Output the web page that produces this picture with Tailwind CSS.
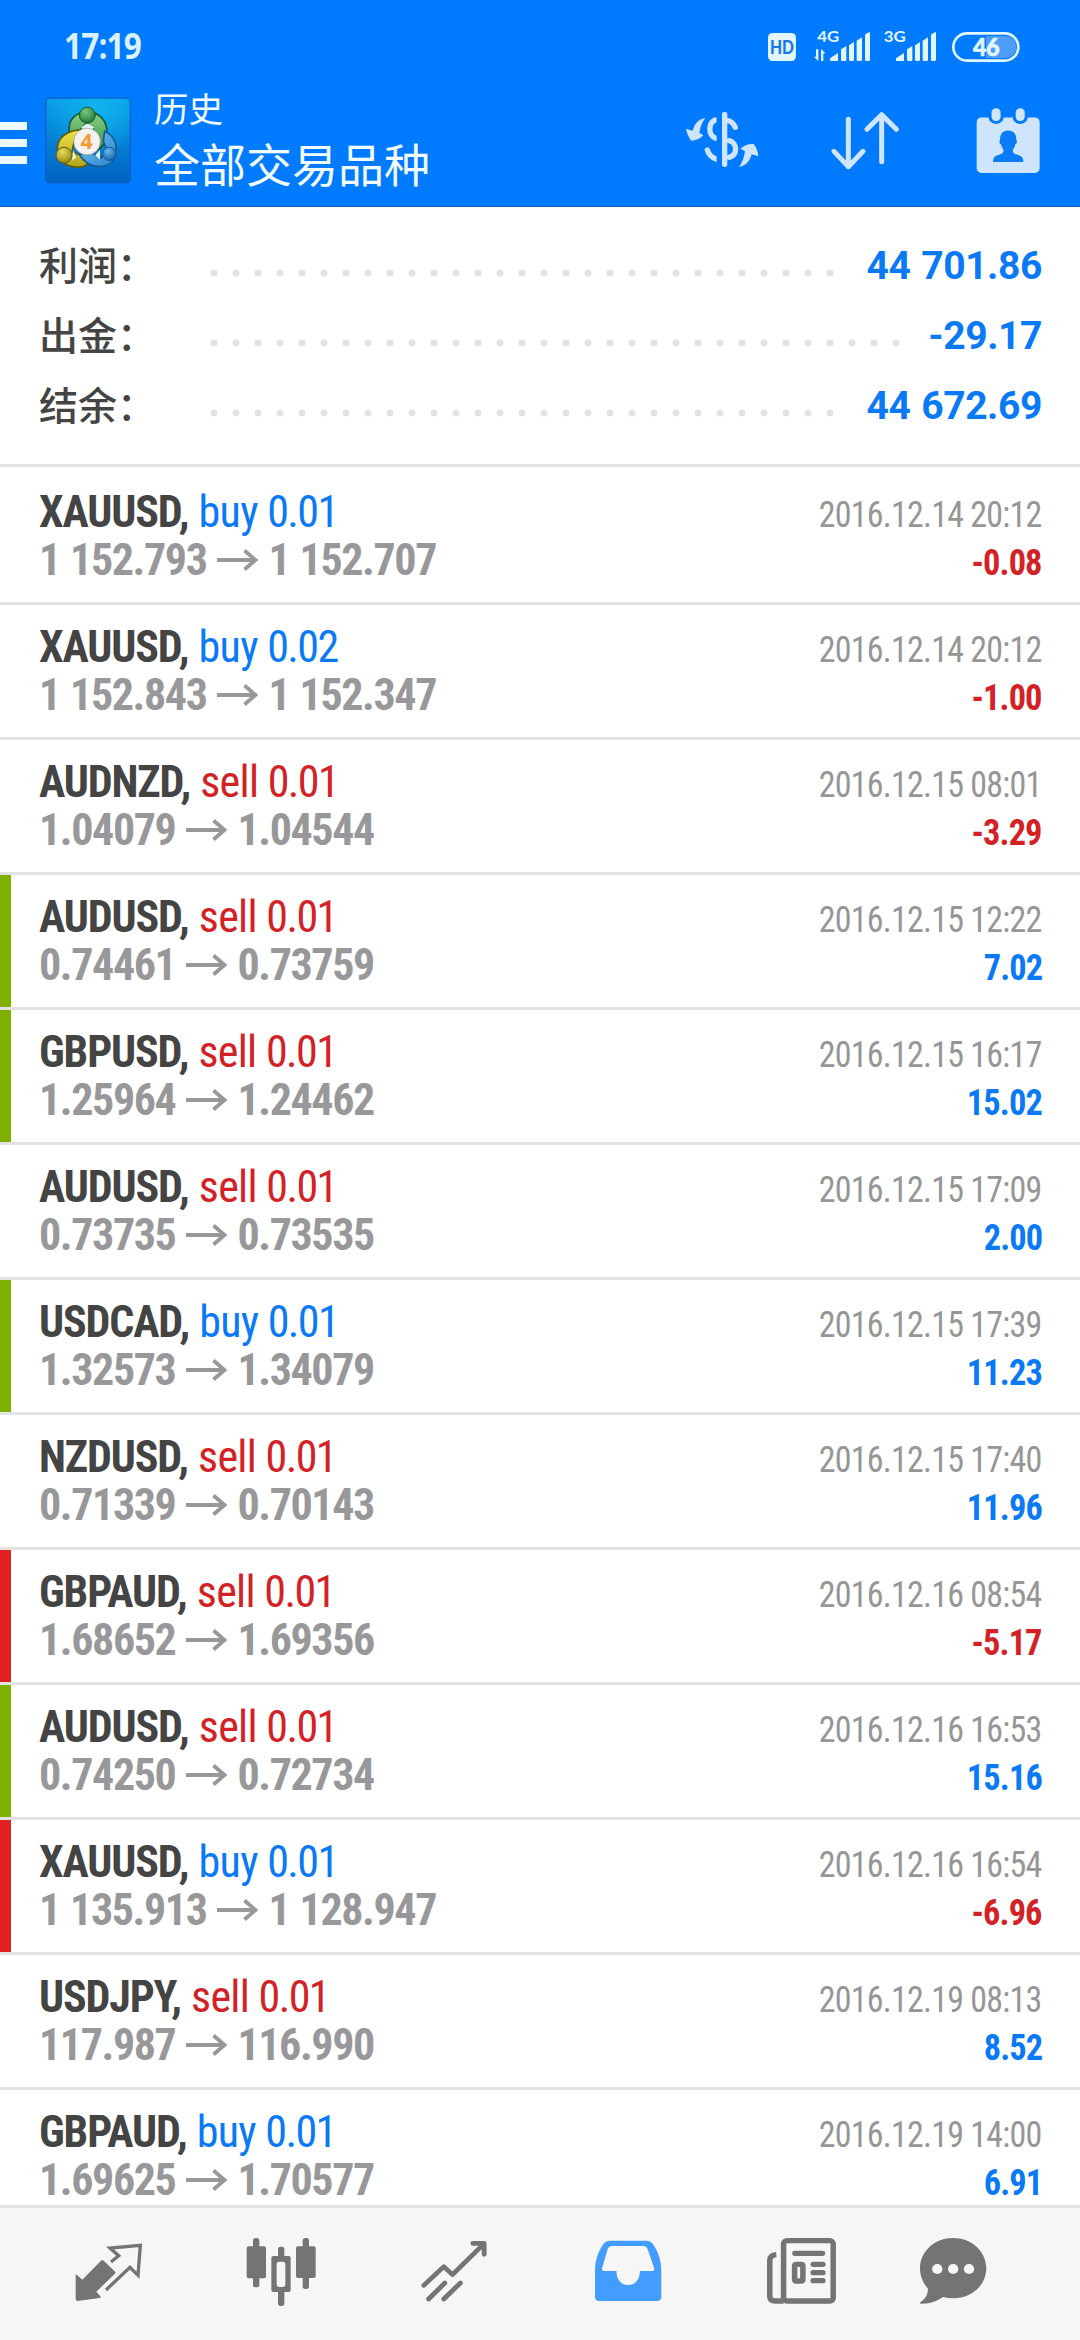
<!DOCTYPE html>
<html lang="zh-CN">
<head>
<meta charset="utf-8">
<title>历史</title>
<script src="https://cdn.jsdelivr.net/npm/@tailwindcss/browser@4"></script>
</head>
<body class="w-[1080px] h-[2340px] overflow-hidden bg-white flex flex-col font-['Roboto','Noto_Sans_CJK_SC',sans-serif]">

<header class="h-[207px] shrink-0 bg-[#007aff] border-b border-[#1a66bd] text-[#f2fbff]">
  <div class="h-20 pl-[64px] pr-[50px] flex justify-between">
    <span class="mt-[22px] h-12 leading-12 text-[35px] font-bold tracking-[-0.9px] origin-left scale-x-90 text-[#daf2ff] font-['Open_Sans',sans-serif]">17:19</span>
    <svg class="mt-5 w-[270px] h-[60px]" viewBox="0 0 810 180" fill="#e2f6ff">
      <rect x="24" y="39" width="84" height="84" rx="14"/>
      <text x="66" y="102" text-anchor="middle" textLength="72" lengthAdjust="spacingAndGlyphs" font-family="Lato, sans-serif" font-weight="900" font-size="54" fill="#1a78e6">HD</text>
      <text x="172" y="66" textLength="66" lengthAdjust="spacingAndGlyphs" font-family="Lato, sans-serif" font-weight="700" font-size="48">4G</text>
      <text x="371" y="66" textLength="66" lengthAdjust="spacingAndGlyphs" font-family="Lato, sans-serif" font-weight="700" font-size="48">3G</text>
      <path d="M168 88h7v35l-14-13h7zM183 123V87l14 13h-7v23z"/>
      <g id="bars">
        <path d="M210 123v-8l24-16v24zM243 88l16-10v41q0 4-4 4h-8q-4 0-4-4zM267 76l15-10v53q0 4-4 4h-7q-4 0-4-4zM290 62l16-10v67q0 4-4 4h-8q-4 0-4-4zM315 44q6-6 15-8v83q0 4-4 4h-7q-4 0-4-4z"/>
      </g>
      <use href="#bars" x="198"/>
      <path d="M678 48h58a33 33 0 0 1 0 66h-58z" fill="#4d9cf8"/>
      <rect x="580" y="40" width="195" height="82" rx="41" fill="none" stroke="#e2f6ff" stroke-width="8"/>
      <text x="679" y="107" text-anchor="middle" textLength="80" lengthAdjust="spacingAndGlyphs" font-family="Lato, sans-serif" font-weight="900" font-size="72" stroke="#e2f6ff" stroke-width="2">46</text>
    </svg>
  </div>
  <div class="h-[126px] flex">
    <div class="mt-[42px] w-[27px] flex flex-col gap-[9px]">
      <i class="h-2 bg-[#eafaff]"></i><i class="h-2 bg-[#eafaff]"></i><i class="h-2 bg-[#eafaff]"></i>
    </div>
    <svg class="mt-[17px] ml-[18px] w-[86px] h-[87px]" viewBox="15 23 258 258">
      <defs>
        <linearGradient id="sky" x1="0" y1="0" x2="0" y2="1"><stop offset="0" stop-color="#0a9fe8"/><stop offset="1" stop-color="#0162c2"/></linearGradient>
        <radialGradient id="glow" cx=".6" cy=".1" r=".6"><stop offset="0" stop-color="#10b4ee"/><stop offset="1" stop-color="#10b4ee" stop-opacity="0"/></radialGradient>
        <linearGradient id="gr" x1="0" y1="0" x2="0" y2="1"><stop offset="0" stop-color="#8fd08a"/><stop offset="1" stop-color="#2f9440"/></linearGradient>
        <linearGradient id="ye" x1="0" y1="0" x2="0" y2="1"><stop offset="0" stop-color="#f0e04a"/><stop offset="1" stop-color="#b3a51c"/></linearGradient>
        <linearGradient id="bl" x1="0" y1="0" x2="1" y2="1"><stop offset="0" stop-color="#7cc4ef"/><stop offset="1" stop-color="#2484cc"/></linearGradient>
        <radialGradient id="hg" cx=".4" cy=".3" r=".7"><stop offset="0" stop-color="#7cc985"/><stop offset="1" stop-color="#1d7a38"/></radialGradient>
        <radialGradient id="hy" cx=".4" cy=".3" r=".7"><stop offset="0" stop-color="#e6dd5c"/><stop offset="1" stop-color="#938a14"/></radialGradient>
        <radialGradient id="hb" cx=".4" cy=".3" r=".7"><stop offset="0" stop-color="#6cb6ea"/><stop offset="1" stop-color="#1766ac"/></radialGradient>
      </defs>
      <rect x="17" y="25" width="254" height="254" rx="12" fill="url(#sky)" stroke="#0a5fc4" stroke-width="4"/>
      <rect x="19" y="27" width="250" height="250" rx="10" fill="url(#glow)"/>
      <path d="M88 128c-6-40 22-62 54-62s64 24 58 72c-2 20-14 34-26 42l-20-24 6-40-20-16-22 22z" fill="url(#gr)" stroke="#125c33" stroke-width="5"/>
      <path d="M126 120c-46 0-74 24-74 58 0 38 30 54 62 54 12 0 24-4 30-10l-18-24-30-12 6-30z" fill="url(#ye)" stroke="#5d5d0e" stroke-width="5"/>
      <path d="M194 124c24 10 38 34 34 62-4 30-24 44-50 44-28 0-48-16-60-36l36-6 30 16 18-20-12-30z" fill="url(#bl)" stroke="#155a9c" stroke-width="5"/>
      <path d="M124 112l18-12 20 12-8 12h-24zM100 180l8 24-12 8zM180 180l-14 16 14 14z" fill="#e6f5ee"/>
      <circle cx="142" cy="76" r="24" fill="url(#hg)" stroke="#125c33" stroke-width="3"/>
      <circle cx="72" cy="196" r="24" fill="url(#hy)" stroke="#5d5d0e" stroke-width="3"/>
      <circle cx="208" cy="192" r="20" fill="url(#hb)" stroke="#155a9c" stroke-width="3"/>
      <circle cx="141" cy="155" r="40" fill="#f4f2f0" stroke="#9a9a92" stroke-width="2"/>
      <text x="140" y="178" text-anchor="middle" font-family="Open Sans, sans-serif" font-weight="700" font-size="64" fill="#f39a35">4</text>
    </svg>
    <div class="ml-[23px] font-['Noto_Sans_CJK_SC',sans-serif] text-[#f2fbff]">
      <div class="mt-[3px] h-12 leading-12 text-[34.5px]">历史</div>
      <div class="mt-[3px] h-14 leading-14 text-[46px]">全部交易品种</div>
    </div>
    <div class="ml-auto mr-[38px] flex text-[#cfe4fd]">
      <svg class="mt-[30px] w-[75px] h-[60px]" viewBox="15 60 225 180" fill="currentColor">
        <path d="M134 73V223M144 92q14 3 22 20M148 152C172 158 174 194 148 202M105 90C84 100 84 136 107 145M82 180q6 20 26 27" fill="none" stroke="currentColor" stroke-width="16" stroke-linecap="round"/>
        <path d="M110 80h8v135h-8z" fill="#007aff"/>
        <path d="M76 84C54 88 44 102 38 122l-20-6q4 22 16 36 20 0 36-16l-12-8q4-26 18-44zM177 231c22-4 34-20 38-38l20 6q-2-22-14-37-22-2-40 14l14 8q-4 28-18 47z"/>
      </svg>
      <svg class="ml-[70px] mt-[30px] w-[70px] h-[60px]" viewBox="450 60 210 180" fill="none" stroke="currentColor" stroke-width="15" stroke-linecap="round" stroke-linejoin="round">
        <path d="M505 88V230M462 184L505 230L549 184M605 215V74M561 118L605 74L649 118"/>
      </svg>
      <svg class="ml-[75px] mt-[27px] w-[67px] h-[67px]" viewBox="885 50 200 200" fill="currentColor">
        <rect x="890" y="81" width="188" height="166" rx="14"/>
        <g stroke="#007aff" stroke-width="9"><rect x="930" y="49" width="36" height="47" rx="17"/><rect x="1002" y="49" width="36" height="47" rx="17"/></g>
        <path d="M984 120c18 0 25 14 24 27 4 6 2 12-3 15-1 8-5 12-7 16 0 11 6 12 16 15 12 3 16 10 15 21h-90c-1-11 3-18 15-21 10-3 16-4 16-15-2-4-6-8-7-16-5-3-7-9-3-15-1-13 6-27 24-27z" fill="#0a7cf8"/>
      </svg>
    </div>
  </div>
</header>

<section class="h-[260px] shrink-0 border-b-3 border-[#e2e2e2] pt-[24px] pl-[39px] pr-[38px] text-[39px]" id="summary"></section>

<main class="flex-1 min-h-0 overflow-hidden" id="list"></main>

<nav class="h-[135px] shrink-0 border-t-3 border-[#e2e2e2] bg-[#f6f6f6] pt-[22px] pl-[75px] flex items-start text-[#747474]">
  <svg class="w-[68px] h-20 shrink-0" viewBox="225 120 204 240" fill="currentColor">
    <path d="M227 256q0-4 4-1l16 14 56-57q4-4 8 0l33 32q4 4 0 8l-55 53 12 14q3 4-2 5l-66 9q-6 0-6-6z"/>
    <path d="M333 216l23-19-26-23 91-8-7 90-24-24-72 68" fill="none" stroke="currentColor" stroke-width="10"/>
  </svg>
  <svg class="ml-[103px] w-[71px] h-20 shrink-0" viewBox="738 120 213 240" fill="currentColor">
    <rect x="759" y="144" width="19" height="148" rx="8"/><rect x="740" y="169" width="58" height="96" rx="6"/>
    <rect x="908" y="144" width="19" height="153" rx="8"/><rect x="888" y="169" width="59" height="95" rx="6"/>
    <rect x="834" y="170" width="19" height="178" rx="8"/><rect x="814" y="198" width="58" height="108" rx="6"/>
    <rect x="830" y="215" width="26" height="76" rx="8" fill="#f6f6f6"/>
  </svg>
  <svg class="ml-[103px] w-[69px] h-20 shrink-0" viewBox="1220 450 200 240" preserveAspectRatio="none" fill="none" stroke="currentColor" stroke-width="14" stroke-linecap="round" stroke-linejoin="round">
    <path d="M1231 616L1289 560L1314 584L1403 494M1373 490H1406V523M1245 657L1292 609M1289 657L1337 609"/>
  </svg>
  <svg class="ml-[105px] w-[69px] h-20 shrink-0" viewBox="155 450 200 240" preserveAspectRatio="none">
    <path fill="#439cff" fill-rule="evenodd" d="M200 482H308q10 0 16 8c18 27 26 50 26 84v76q0 13-13 13H171q-13 0-13-13v-76c0-34 8-57 26-84q6-8 16-8zM206 498q-8 0-11 8l-17 60q-1 7 6 7h36c0 24 12 42 34 42s34-18 34-42h36q7 0 6-7l-20-60q-3-8-11-8z"/>
  </svg>
  <svg class="ml-[103px] w-[71px] h-20 shrink-0" viewBox="655 450 206 240" preserveAspectRatio="none" fill="none" stroke="currentColor" stroke-width="16">
    <rect x="706" y="482" width="144" height="181" rx="10"/>
    <path d="M706 663h-26q-14 0-14-14V541q0-15 19-17"/>
    <path d="M739 520H819M792 553H820M792 578H820M792 602H820" stroke-linecap="round"/>
    <rect x="738" y="553" width="24" height="50" rx="4"/>
  </svg>
  <svg class="ml-[82px] w-[69px] h-20 shrink-0" viewBox="1100 450 200 240" preserveAspectRatio="none" fill="currentColor">
    <path d="M1199 474c53 0 96 40 96 91s-43 90-96 90q-15 0-29-4c-16 11-38 21-64 20q-5-1-1-5c14-10 21-24 21-40-15-17-23-38-23-61 0-51 43-91 96-91z"/>
    <g fill="#f6f6f6"><circle cx="1153" cy="567" r="15"/><circle cx="1199" cy="567" r="15"/><circle cx="1245" cy="567" r="15"/></g>
  </svg>
</nav>

<script>
const summary = [['利润：', '44 701.86', 29], ['出金：', '-29.17', 32], ['结余：', '44 672.69', 29]];
document.getElementById('summary').innerHTML = summary.map(([label, value, dots]) => `
  <div class="h-[70px] flex items-center">
    <span class="w-[164px] pb-[5px] font-medium text-[#444] font-['Noto_Sans_CJK_SC',sans-serif]">${label}</span>
    <span class="mt-[14px] h-[22px] bg-[radial-gradient(circle,#e3e3e3_3px,transparent_4px)] bg-[length:22px_22px]" style="width:${dots * 22}px"></span>
    <span class="ml-auto pt-px font-bold tracking-[-0.4px] [word-spacing:1.5px] text-[#0a79f5] whitespace-nowrap">${value}</span>
  </div>`).join('');

const rows = [
  ['XAUUSD', 'buy', '0.01', '1 152.793', '1 152.707', '2016.12.14 20:12', '-0.08', ''],
  ['XAUUSD', 'buy', '0.02', '1 152.843', '1 152.347', '2016.12.14 20:12', '-1.00', ''],
  ['AUDNZD', 'sell', '0.01', '1.04079', '1.04544', '2016.12.15 08:01', '-3.29', ''],
  ['AUDUSD', 'sell', '0.01', '0.74461', '0.73759', '2016.12.15 12:22', '7.02', 'g'],
  ['GBPUSD', 'sell', '0.01', '1.25964', '1.24462', '2016.12.15 16:17', '15.02', 'g'],
  ['AUDUSD', 'sell', '0.01', '0.73735', '0.73535', '2016.12.15 17:09', '2.00', ''],
  ['USDCAD', 'buy', '0.01', '1.32573', '1.34079', '2016.12.15 17:39', '11.23', 'g'],
  ['NZDUSD', 'sell', '0.01', '0.71339', '0.70143', '2016.12.15 17:40', '11.96', ''],
  ['GBPAUD', 'sell', '0.01', '1.68652', '1.69356', '2016.12.16 08:54', '-5.17', 'r'],
  ['AUDUSD', 'sell', '0.01', '0.74250', '0.72734', '2016.12.16 16:53', '15.16', 'g'],
  ['XAUUSD', 'buy', '0.01', '1 135.913', '1 128.947', '2016.12.16 16:54', '-6.96', 'r'],
  ['USDJPY', 'sell', '0.01', '117.987', '116.990', '2016.12.19 08:13', '8.52', ''],
  ['GBPAUD', 'buy', '0.01', '1.69625', '1.70577', '2016.12.19 14:00', '6.91', '']
];
const edge = { g: 'border-[#7fb000]', r: 'border-[#e02020]', '': 'border-transparent' };
document.getElementById('list').innerHTML = rows.map(([sym, side, lots, from, to, date, pl, mark], i) => `
  <div class="border-b-3 border-[#e2e2e2] ${i ? '' : 'pt-[3px]'}">
    <div class="h-[132px] border-l-11 ${edge[mark]} pl-7 pr-[38px] pt-[18px] font-['Roboto_Condensed',sans-serif]">
      <div class="h-12 leading-12 flex items-baseline justify-between text-[44px] whitespace-nowrap">
        <div class="text-[#444]"><b class="tracking-[-1.15px]">${sym},</b> <span class="tracking-[-0.7px] ${side === 'buy' ? 'text-[#0a79f5]' : 'text-[#d22226]'}">${side} <span class="tracking-[-1.6px]">${lots}</span></span></div>
        <span class="text-[36.5px] tracking-[-0.8px] origin-right scale-x-93 text-[#969696]">${date}</span>
      </div>
      <div class="h-12 leading-12 flex items-baseline justify-between text-[44px] whitespace-nowrap font-bold">
        <div class="flex items-baseline tracking-[-1.4px] [word-spacing:1.5px] text-[#98989b]"><span>${from}</span><svg class="ml-[11px] mr-[9px] w-[42px] h-[22px] self-center" viewBox="0 0 42 22" fill="none" stroke="currentColor" stroke-width="3.8"><path d="M0 11H39M27.500 1.500L38.500 11L27.500 20.500"/></svg><span>${to}</span></div>
        <span class="text-[36.5px] tracking-[-0.9px] origin-right scale-x-94 ${pl[0] === '-' ? 'text-[#d22226]' : 'text-[#0a79f5]'}">${pl}</span>
      </div>
    </div>
  </div>`).join('');
</script>
</body>
</html>
